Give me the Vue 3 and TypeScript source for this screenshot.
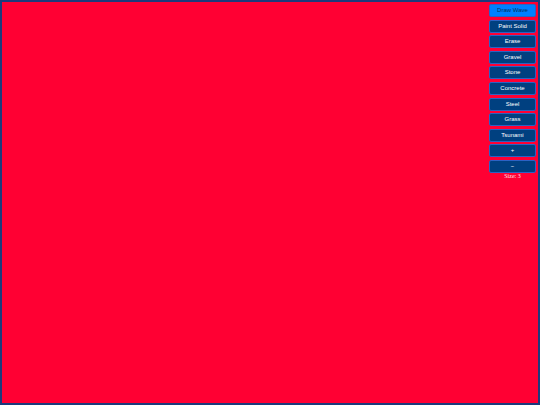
<script setup lang="ts">
import { ref } from 'vue'

const tools: string[] = [
  'Draw Wave',
  'Paint Solid',
  'Erase',
  'Gravel',
  'Stone',
  'Concrete',
  'Steel',
  'Grass',
  'Tsunami',
]
const active = ref<string>('Draw Wave')
const size = ref<number>(3)

function resize(step: number): void {
  size.value = Math.max(1, size.value + step)
}
</script>

<template>
  <main class="stage">
    <aside class="toolbar">
      <div class="buttons">
        <button
          v-for="tool in tools"
          :key="tool"
          type="button"
          class="tool"
          :class="{ active: tool === active }"
          @click="active = tool"
        >
          {{ tool }}
        </button>
        <button type="button" class="tool" @click="resize(1)">+</button>
        <button type="button" class="tool" @click="resize(-1)">−</button>
      </div>
      <div class="size">Size: {{ size }}</div>
    </aside>
  </main>
</template>

<style>
body {
  margin: 0;
  background: #ff0033;
}
</style>

<style scoped>
.stage {
  box-sizing: border-box;
  min-height: 100vh;
  display: flex;
  justify-content: flex-end;
  align-items: flex-start;
  padding: 2px;
  border: 2px solid #1c3a7c;
  background: #ff0033;
}

.toolbar {
  width: 47px;
}

.buttons {
  display: flex;
  flex-direction: column;
  justify-content: space-between;
  height: 169px;
}

.tool {
  box-sizing: border-box;
  width: 100%;
  height: 13px;
  padding: 0;
  border: 1px solid #2c62c4;
  border-radius: 2px;
  background: #004080;
  color: #ffffff;
  font-family: "Liberation Sans", Arial, sans-serif;
  font-size: 6px;
  line-height: 11px;
  text-align: center;
  cursor: pointer;
}

.tool.active {
  background: #0080ff;
  color: #003060;
}

.size {
  color: #ffe0e8;
  font-family: "Liberation Serif", "Times New Roman", serif;
  font-size: 6px;
  line-height: 6px;
  text-align: center;
}
</style>
